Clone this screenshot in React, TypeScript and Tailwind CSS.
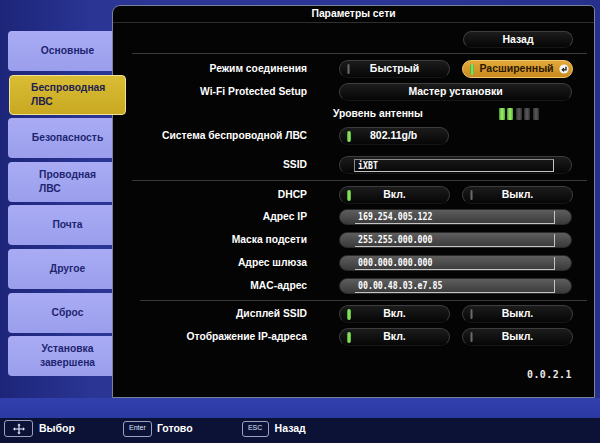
import React from "react";

const Ind = ({ on }: { on: boolean }) =>
  on ? (
    <span className="w-[4px] h-[11px] rounded-full bg-[linear-gradient(90deg,#3f9a26,#9cf06a,#4faa30)] shrink-0" />
  ) : (
    <span className="w-[3px] h-[10px] rounded-full bg-[linear-gradient(90deg,#2a2a2a,#6a6a6a,#2a2a2a)] shrink-0" />
  );

const Btn = ({ label, ind, w = "w-[111px]" }: { label: string; ind?: boolean; w?: string }) => (
  <div
    className={`${w} h-[18px] rounded-[9px] border border-[#3d3d3d] border-b-[#161616] bg-[linear-gradient(180deg,#1c1c1c,#060606)] flex items-center px-[7px] relative`}
  >
    {ind !== undefined && <Ind on={ind} />}
    <span className="absolute inset-0 flex items-center justify-center text-white font-bold text-[10.5px]">{label}</span>
  </div>
);

const Field = ({ value }: { value: string }) => (
  <div className="w-[233px] h-[16px] rounded-[8px] bg-[linear-gradient(180deg,#5e5e5e,#3a3a3a)] border border-[#2a2a2a] flex items-center">
    <div className="ml-[15px] w-[200px] h-[13px] border-b border-r border-[#c4c4c4] flex items-center pl-[3px] overflow-hidden">
      <span className="inline-block origin-left scale-x-75 text-white font-bold text-[11px] font-['DejaVu_Sans_Mono',monospace] leading-none whitespace-nowrap">
        {value}
      </span>
    </div>
  </div>
);

const Row = ({ label, children, mt }: { label: string; children?: React.ReactNode; mt: string }) => (
  <div className={`flex items-center ${mt}`}>
    <div className="w-[194px] text-right text-white font-bold text-[10.3px] whitespace-nowrap">{label}</div>
    <div className="ml-[32px] flex items-center gap-[12px]">{children}</div>
  </div>
);

const tabs: { t: React.ReactNode; sel?: boolean; align?: string }[] = [
  { t: "Основные" },
  { t: <>Беспроводная<br />ЛВС</>, sel: true, align: "left" },
  { t: "Безопасность" },
  { t: <>Проводная<br />ЛВС</>, align: "left" },
  { t: "Почта" },
  { t: "Другое" },
  { t: "Сброс" },
  { t: <>Установка<br />завершена</> },
];

export default function App() {
  return (
    <div className="w-[600px] h-[443px] flex flex-col overflow-hidden font-['Liberation_Sans',Arial,sans-serif] bg-[linear-gradient(90deg,#1c2578_0%,#2a3594_15%,#2b3698_60%,#26318c_100%)]">
      <div className="flex h-[398px]">
        <div className="w-[112px] shrink-0 pl-[8px] pt-[31px] flex flex-col gap-[3.6px]">
          {tabs.map((tab, i) =>
            tab.sel ? (
              <div
                key={i}
                className="relative z-10 ml-[1px] w-[117px] h-[40px] rounded-[4px] border border-[#efe39a] bg-[linear-gradient(180deg,#d9bd34,#c9a822)] flex items-center pl-[21px] text-[#1e2050] font-bold text-[10.3px] leading-[14px]"
              >
                <div className="text-left">{tab.t}</div>
              </div>
            ) : (
              <div
                key={i}
                className="w-[104px] h-[40px] rounded-l-[4px] bg-[linear-gradient(180deg,#a9acf4,#9a9eec)] flex items-center justify-center pl-[15px] text-[#1e2570] font-bold text-[10.3px] leading-[14px]"
              >
                <div className={tab.align === "left" ? "text-left" : "text-center"}>{tab.t}</div>
              </div>
            )
          )}
        </div>
        <div className="flex-1 mt-[5px] mr-[5px] bg-[#040404] border border-[#7c8098] rounded-tl-[8px] rounded-tr-[5px] flex flex-col">
          <div className="h-[17px] border-b border-[#2e2e2e] flex items-center justify-center text-white font-bold text-[10.3px]">
            Параметры сети
          </div>
          <div className="mt-[8px] flex justify-end pr-[21px]">
            <div className="w-[110px] h-[17px] rounded-[9px] border border-[#3d3d3d] border-b-[#161616] bg-[linear-gradient(180deg,#1c1c1c,#060606)] flex items-center justify-center text-white font-bold text-[10.5px]">
              Назад
            </div>
          </div>
          <div className="mt-[5px] ml-[19px] mr-[7px] border-t border-[#3a3a3a]" />
          <Row label="Режим соединения" mt="mt-[6px]">
            <Btn label="Быстрый" ind={false} />
            <div className="w-[111px] h-[18px] rounded-[9px] border border-[#f2c66a] bg-[linear-gradient(180deg,#e3a93a,#c98a1e)] flex items-center pl-[7px] pr-[3px] relative">
              <Ind on={true} />
              <span className="absolute inset-0 flex items-center justify-center pr-[2px] text-[#2a1800] font-bold text-[10.5px]">Расширенный</span>
              <svg className="ml-auto relative" width="10" height="10" viewBox="0 0 10 10">
                <circle cx="5" cy="5" r="4.6" fill="#f4f4f4" />
                <path d="M7 2.8 V5.8 H3.6" stroke="#1a1a1a" strokeWidth="1.3" fill="none" />
                <path d="M5 4.2 L3.3 5.8 L5 7.4" stroke="#1a1a1a" strokeWidth="1.2" fill="none" />
              </svg>
            </div>
          </Row>
          <Row label="Wi-Fi Protected Setup" mt="mt-[5px]">
            <Btn label="Мастер установки" w="w-[233px]" />
          </Row>
          <div className="mt-[7px] h-[12px] flex items-center">
            <div className="ml-[220px] text-white font-bold text-[10.3px]">Уровень антенны</div>
            <div className="ml-[76px] flex gap-[2.5px]">
              {[1, 1, 0, 0, 0].map((b, i) => (
                <span
                  key={i}
                  className={
                    b
                      ? "w-[6px] h-[12px] rounded-[1px] bg-[linear-gradient(90deg,#3f9a26,#a4f070,#4faa30)]"
                      : "w-[6px] h-[12px] rounded-[1px] bg-[linear-gradient(90deg,#2e2e2e,#5a5a5a,#2e2e2e)]"
                  }
                />
              ))}
            </div>
          </div>
          <Row label="Система беспроводной ЛВС" mt="mt-[7px]">
            <div className="w-[110px] h-[18px] rounded-[9px] border border-[#3d3d3d] border-b-[#161616] bg-[linear-gradient(180deg,#1c1c1c,#060606)] flex items-center px-[7px]">
              <Ind on={true} />
              <span className="ml-[19px] text-white font-bold text-[10.5px]">802.11g/b</span>
            </div>
          </Row>
          <Row label="SSID" mt="mt-[11px]">
            <div className="w-[233px] h-[18px] rounded-[9px] border border-[#3d3d3d] border-b-[#161616] bg-[linear-gradient(180deg,#1c1c1c,#060606)] flex items-center">
              <div className="ml-[14px] w-[200px] h-[13px] border border-[#8a8a8a] border-b-[#c4c4c4] border-r-[#c4c4c4] flex items-center pl-[3px]">
                <span className="inline-block origin-left scale-x-75 text-white font-bold text-[11px] font-['DejaVu_Sans_Mono',monospace] leading-none">
                  iXBT
                </span>
              </div>
            </div>
          </Row>
          <div className="mt-[6px] ml-[19px] mr-[7px] border-t border-[#3a3a3a]" />
          <Row label="DHCP" mt="mt-[5px]">
            <Btn label="Вкл." ind={true} />
            <Btn label="Выкл." ind={false} />
          </Row>
          <Row label="Адрес IP" mt="mt-[5px]">
            <Field value="169.254.005.122" />
          </Row>
          <Row label="Маска подсети" mt="mt-[7px]">
            <Field value="255.255.000.000" />
          </Row>
          <Row label="Адрес шлюза" mt="mt-[7px]">
            <Field value="000.000.000.000" />
          </Row>
          <Row label="MAC-адрес" mt="mt-[7px]">
            <Field value="00.00.48.03.e7.85" />
          </Row>
          <div className="mt-[6px] ml-[27px] mr-[7px] border-t border-[#3a3a3a]" />
          <Row label="Дисплей SSID" mt="mt-[4px]">
            <Btn label="Вкл." ind={true} />
            <Btn label="Выкл." ind={false} />
          </Row>
          <Row label="Отображение IP-адреса" mt="mt-[5px]">
            <Btn label="Вкл." ind={true} />
            <Btn label="Выкл." ind={false} />
          </Row>
          <div className="mt-[21px] pr-[22px] flex justify-end">
            <span className="inline-block text-[#e8e8e8] font-bold text-[11px] font-['DejaVu_Sans_Mono',monospace] tracking-[0.5px] scale-x-90 origin-right">
              0.0.2.1
            </span>
          </div>
        </div>
      </div>
      <div className="h-[20px] bg-[linear-gradient(180deg,#3240ae,#2b39a3)]" />
      <div className="h-[25px] bg-[#0c1236] flex items-center pb-[4px] text-white font-bold text-[10.5px]">
        <div className="ml-[4px] w-[29px] h-[17px] rounded-[3px] border border-[#9aa0c0] flex items-center justify-center">
          <svg width="14" height="12" viewBox="0 0 14 12">
            <path d="M7 2 V10 M2.5 6 H11.5" stroke="#e8ecff" strokeWidth="1.2" />
            <path d="M7 0.5 L5.3 2.6 H8.7 Z M7 11.5 L5.3 9.4 H8.7 Z M1 6 L3.1 4.3 V7.7 Z M13 6 L10.9 4.3 V7.7 Z" fill="#e8ecff" />
          </svg>
        </div>
        <span className="ml-[6px]">Выбор</span>
        <div className="ml-[48px] w-[29px] h-[16px] rounded-[3px] border border-[#9aa0c0] flex items-center justify-center text-[7px] font-normal text-[#dfe3ff]">
          Enter
        </div>
        <span className="ml-[5px]">Готово</span>
        <div className="ml-[49px] w-[27px] h-[16px] rounded-[3px] border border-[#9aa0c0] flex items-center justify-center text-[7px] font-normal text-[#dfe3ff]">
          ESC
        </div>
        <span className="ml-[6px]">Назад</span>
      </div>
    </div>
  );
}
